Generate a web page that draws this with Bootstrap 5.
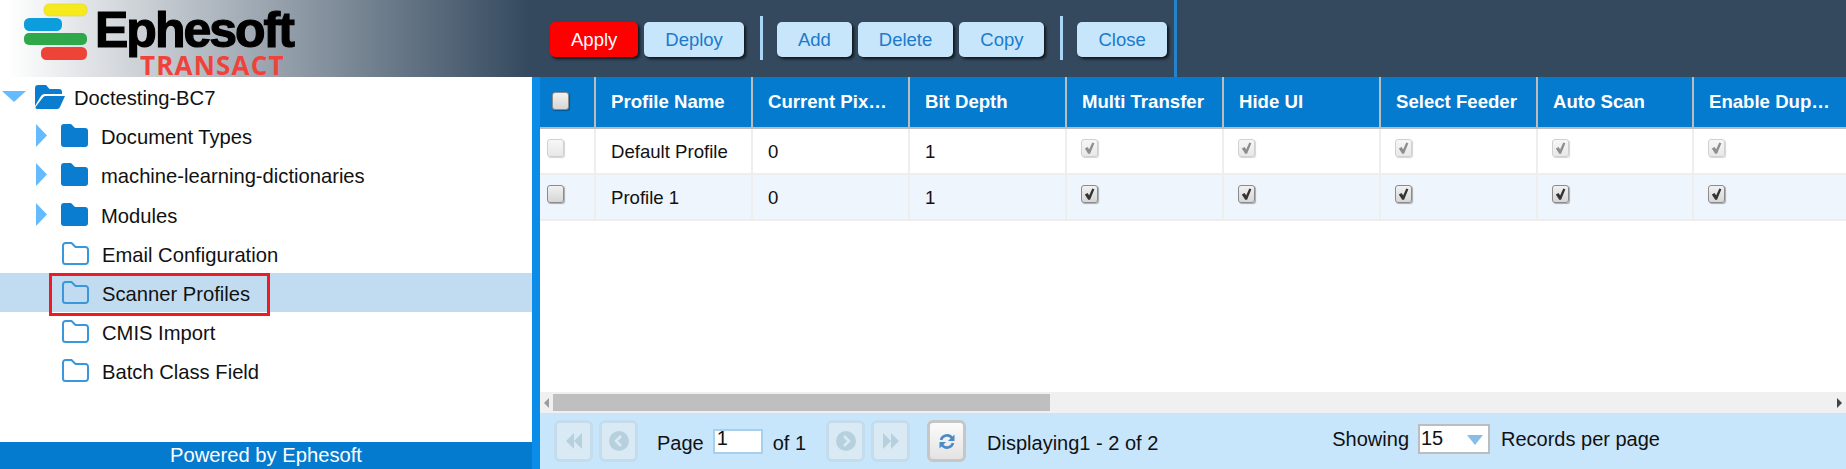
<!DOCTYPE html>
<html lang="en">
<head>
<meta charset="utf-8">
<title>Ephesoft Transact</title>
<link href="https://cdn.jsdelivr.net/npm/bootstrap@5.3.0/dist/css/bootstrap.min.css" rel="stylesheet">
<style>
html,body{height:100%;overflow:hidden}
body{font-family:"Liberation Sans",Arial,sans-serif;color:#111;background:#fff}
.app-shell{height:469px;width:1846px}
.top-bar{height:77px;background:#34495e;flex:none}
.logo-zone{width:540px;height:77px;background:linear-gradient(90deg,#fff 0,#fff 8px,#34495e 530px);flex:none}
.logo-zone svg{display:block}
.logo-main{font-family:"Liberation Sans",Arial,sans-serif;font-weight:700;font-size:50px;letter-spacing:-2px;fill:#000;stroke:#000;stroke-width:1.2}
.logo-sub{font-family:"Open Sans",sans-serif;font-weight:700;font-size:26px;letter-spacing:1.2px;fill:#f0423a}
.tool-zone{height:77px;padding-left:10px;width:637px;border-right:3px solid #2583cc;flex:none}
.tool-btn{height:35px;padding:0 21px;border:0;border-radius:5px;background:#c7e6fc;color:#1b7acb;font-size:18.5px;line-height:35px;box-shadow:2px 2px 3px rgba(0,0,0,.7);margin-top:2px}
.tool-btn:hover,.tool-btn:active{background:#c7e6fc;color:#1b7acb}
.tool-btn.go-red,.tool-btn.go-red:hover{background:#f00;color:#fff}
.tool-btn.raised{padding-bottom:3px}
.tool-gap{margin-left:6px}
.bar-split{width:3px;height:44px;background:#a9d6f6;margin:-2px 14px 0 16px}
.body-zone{height:392px}
.tree-pane{width:532px;flex:none}
.tree-list{padding:0;margin:0;list-style:none}
.tree-row{height:39.2px;font-size:20.2px;position:relative}
.tree-row.picked{background:#c1dcf1}
.tree-label{padding-top:3px;white-space:nowrap}
.tree-row.lvl0 svg.folder-ico{margin-left:9px;margin-right:9px}
.caret-down{margin-left:2px}
.caret-right{margin-left:36px;margin-right:14px}
.solid-label{margin-left:13px}
.leaf-ico{margin-left:62px;margin-right:13px}
.mark-box{position:absolute;left:49px;top:0;width:221px;height:43px;border:3px solid #ed1c24}
.tree-foot{height:27px;background:#047bce;color:#fff;font-size:20.2px;line-height:27px;text-align:center;flex:none}
.pane-split{width:8px;background:#0a8ce8;flex:none}
.grid-pane{width:1306px;flex:none}
.grid-scroll{height:315px;overflow:hidden}
.grid-table{table-layout:fixed;width:1309px;margin:0;border-collapse:separate;border-spacing:0;font-size:18.6px}
.grid-table th,.grid-table td{padding:0 14px 0 15px;vertical-align:middle;white-space:nowrap;overflow:hidden;text-overflow:ellipsis;border:0}
.grid-table th{height:52px;background:#047bce;color:#fff;font-weight:700;border-left:2px solid #bcbcbc;border-bottom:2px solid #bcbcbc}
.grid-table th:first-child{border-left:0;padding:15px 0 0 12px;vertical-align:top}
.grid-table td{height:46px;color:#111;background:#fff;border-left:2px solid #eee;border-bottom:2px solid #eee;padding-top:1px}
.grid-table tr.alt-row td{background:#eef5fc}
.grid-table td:first-child{border-left:0;padding:10px 0 0 7px;vertical-align:top}
.grid-table td.tick-cell{vertical-align:top;padding:10px 0 0 14px}
.c-box{width:54px}
.c-wide{width:157px}
.c-last{width:156px}
.tick{appearance:none;-webkit-appearance:none;display:block;width:17px;height:18px;margin:0;border:1px solid #8b8b8b;border-radius:3px;background:linear-gradient(#f1f1f1,#d6d6d6);box-shadow:1px 1px 1px rgba(0,0,0,.3)}
.tick:checked{background:url("data:image/svg+xml,%3Csvg xmlns='http://www.w3.org/2000/svg' viewBox='0 0 16 17'%3E%3Cpath d='M3 9l3-1.500 1.600 2.600L11 2.500l2.200 1-4.600 11H6.600z' fill='%23333'/%3E%3C/svg%3E") center/100% 100% no-repeat,linear-gradient(#f1f1f1,#d6d6d6)}
.tick:disabled{opacity:.55;border-color:#aaa}
.hscroll{height:21px;background:#f0f0f0;padding:2px 0;flex:none}
.hscroll-thumb{width:497px;height:17px;background:#bfbfbf;margin:0 0 0 4px}
.hscroll-arrow{flex:none}
.pager{height:56px;background:#c7e6fc;font-size:20px;padding-left:14px;flex:none;white-space:nowrap}
.pg-btn{width:39px;height:42px;border:3px solid #c4dcec;border-radius:6px;background:#d9eaf5;display:flex;align-items:center;justify-content:center;padding:0;flex:none}
.pg-btn+.pg-btn{margin-left:6px}
.pg-live{background:linear-gradient(#fbfbfb,#e3e3e3);border-color:#c6c6c6}
.pg-low{padding-top:4px}
.pg-input{width:50px;height:25px;border:2px solid #a6d0ec;border-radius:0;padding:0 0 6px 2px;font-size:20px;line-height:19px;margin:0 10px 0 9px;color:#111}
.pg-text-a{margin-left:19px}
.pg-set-b{margin-left:20px}
.pg-set-c{margin-left:17px}
.pg-text-d{margin-left:21px}
.pg-text-e{margin-left:174px;margin-top:-4px}
.pg-text-f{margin-top:-4px}
.pg-select{width:72px;height:30px;border:2px solid #bdbdbd;border-radius:0;padding:0 0 2px 1px;font-size:20px;line-height:24px;margin:-4px 11px 0 9px;color:#111;background:#fff url("data:image/svg+xml,%3Csvg xmlns='http://www.w3.org/2000/svg' viewBox='0 0 16 10'%3E%3Cpath d='M0 0h16L8 10z' fill='%2387bde6'/%3E%3C/svg%3E") 47px 9px/16px 10px no-repeat}
</style>
</head>
<body>
<div class="app-shell d-flex flex-column">
  <header class="top-bar d-flex">
    <div class="logo-zone">
      <svg width="320" height="77" viewBox="0 0 320 77" role="img" aria-label="Ephesoft Transact">
        <rect x="44" y="4" width="43" height="12" rx="5" fill="#f7ea1c" stroke="#dcd33a" stroke-width=".6"/>
        <rect x="24" y="18" width="38" height="13" rx="5.500" fill="#0b9ddc"/>
        <rect x="24" y="33" width="63" height="12" rx="5" fill="#2fa84a"/>
        <rect x="41" y="47" width="46" height="13" rx="5.500" fill="#ee4438"/>
        <text class="logo-main" x="95" y="47">Ephesoft</text>
        <text class="logo-sub" x="140" y="75">TRANSACT</text>
      </svg>
    </div>
    <div class="tool-zone d-flex align-items-center">
      <button type="button" class="btn tool-btn go-red">Apply</button>
      <button type="button" class="btn tool-btn tool-gap">Deploy</button>
      <span class="bar-split"></span>
      <button type="button" class="btn tool-btn raised">Add</button>
      <button type="button" class="btn tool-btn raised tool-gap">Delete</button>
      <button type="button" class="btn tool-btn raised tool-gap">Copy</button>
      <span class="bar-split"></span>
      <button type="button" class="btn tool-btn">Close</button>
    </div>
  </header>
  <div class="body-zone d-flex">
    <aside class="tree-pane d-flex flex-column">
      <div class="flex-grow-1">
        <ul class="tree-list">
          <li class="tree-row lvl0 d-flex align-items-center">
            <svg class="caret-down" width="24" height="11" viewBox="0 0 24 11"><path d="M0 0h24L12 11z" fill="#66bbff"/></svg>
            <svg class="folder-ico" width="30" height="24" viewBox="0 0 30 24"><path d="M3 0h8l3.500 4H24a3 3 0 0 1 3 3v2H9.500a4 4 0 0 0-3.800 2.500L0 21V3a3 3 0 0 1 3-3z" fill="#0a7dd0"/><path d="M10 11h20l-5 11a3 3 0 0 1-2.700 2H2a1.500 1.500 0 0 1-1.300-2.200L7.500 13A4 4 0 0 1 10 11z" fill="#0a7dd0"/></svg>
            <span class="tree-label">Doctesting-BC7</span>
          </li>
          <li class="tree-row d-flex align-items-center">
            <svg class="caret-right" width="11" height="23" viewBox="0 0 11 23"><path d="M0 0l11 11.500L0 23z" fill="#66bbff"/></svg>
            <svg class="solid-ico" width="27" height="23" viewBox="0 0 27 23"><path d="M3 0h7l4 4h10a3 3 0 0 1 3 3v13a3 3 0 0 1-3 3H3a3 3 0 0 1-3-3V3a3 3 0 0 1 3-3z" fill="#0a7dd0"/></svg>
            <span class="tree-label solid-label">Document Types</span>
          </li>
          <li class="tree-row d-flex align-items-center">
            <svg class="caret-right" width="11" height="23" viewBox="0 0 11 23"><path d="M0 0l11 11.500L0 23z" fill="#66bbff"/></svg>
            <svg class="solid-ico" width="27" height="23" viewBox="0 0 27 23"><path d="M3 0h7l4 4h10a3 3 0 0 1 3 3v13a3 3 0 0 1-3 3H3a3 3 0 0 1-3-3V3a3 3 0 0 1 3-3z" fill="#0a7dd0"/></svg>
            <span class="tree-label solid-label">machine-learning-dictionaries</span>
          </li>
          <li class="tree-row d-flex align-items-center">
            <svg class="caret-right" width="11" height="23" viewBox="0 0 11 23"><path d="M0 0l11 11.500L0 23z" fill="#66bbff"/></svg>
            <svg class="solid-ico" width="27" height="23" viewBox="0 0 27 23"><path d="M3 0h7l4 4h10a3 3 0 0 1 3 3v13a3 3 0 0 1-3 3H3a3 3 0 0 1-3-3V3a3 3 0 0 1 3-3z" fill="#0a7dd0"/></svg>
            <span class="tree-label solid-label">Modules</span>
          </li>
          <li class="tree-row d-flex align-items-center">
            <svg class="leaf-ico" width="27" height="23" viewBox="0 0 27 23"><path d="M3.500 1h6l4 4h10a2.500 2.500 0 0 1 2.500 2.500v12a2.500 2.500 0 0 1-2.500 2.500h-20A2.500 2.500 0 0 1 1 19.500v-16A2.500 2.500 0 0 1 3.500 1z" fill="none" stroke="#3a97dc" stroke-width="2"/></svg>
            <span class="tree-label">Email Configuration</span>
          </li>
          <li class="tree-row picked d-flex align-items-center">
            <svg class="leaf-ico" width="27" height="23" viewBox="0 0 27 23"><path d="M3.500 1h6l4 4h10a2.500 2.500 0 0 1 2.500 2.500v12a2.500 2.500 0 0 1-2.500 2.500h-20A2.500 2.500 0 0 1 1 19.500v-16A2.500 2.500 0 0 1 3.500 1z" fill="none" stroke="#3a97dc" stroke-width="2"/></svg>
            <span class="tree-label">Scanner Profiles</span>
            <span class="mark-box"></span>
          </li>
          <li class="tree-row d-flex align-items-center">
            <svg class="leaf-ico" width="27" height="23" viewBox="0 0 27 23"><path d="M3.500 1h6l4 4h10a2.500 2.500 0 0 1 2.500 2.500v12a2.500 2.500 0 0 1-2.500 2.500h-20A2.500 2.500 0 0 1 1 19.500v-16A2.500 2.500 0 0 1 3.500 1z" fill="none" stroke="#3a97dc" stroke-width="2"/></svg>
            <span class="tree-label">CMIS Import</span>
          </li>
          <li class="tree-row d-flex align-items-center">
            <svg class="leaf-ico" width="27" height="23" viewBox="0 0 27 23"><path d="M3.500 1h6l4 4h10a2.500 2.500 0 0 1 2.500 2.500v12a2.500 2.500 0 0 1-2.500 2.500h-20A2.500 2.500 0 0 1 1 19.500v-16A2.500 2.500 0 0 1 3.500 1z" fill="none" stroke="#3a97dc" stroke-width="2"/></svg>
            <span class="tree-label">Batch Class Field</span>
          </li>
        </ul>
      </div>
      <div class="tree-foot">Powered by Ephesoft</div>
    </aside>
    <div class="pane-split"></div>
    <main class="grid-pane d-flex flex-column">
      <div class="grid-scroll flex-grow-1">
        <table class="table grid-table">
          <colgroup><col class="c-box"><col class="c-wide"><col class="c-wide"><col class="c-wide"><col class="c-wide"><col class="c-wide"><col class="c-wide"><col class="c-last"><col class="c-wide"></colgroup>
          <thead>
            <tr>
              <th><input class="tick" type="checkbox" aria-label="Select all"></th>
              <th>Profile Name</th><th>Current Pixel Type</th><th>Bit Depth</th><th>Multi Transfer</th><th>Hide UI</th><th>Select Feeder</th><th>Auto Scan</th><th>Enable Duplex</th>
            </tr>
          </thead>
          <tbody>
            <tr>
              <td><input class="tick" type="checkbox" disabled aria-label="Select row"></td>
              <td>Default Profile</td><td>0</td><td>1</td>
              <td class="tick-cell"><input class="tick" type="checkbox" checked disabled aria-label="Multi Transfer"></td>
              <td class="tick-cell"><input class="tick" type="checkbox" checked disabled aria-label="Hide UI"></td>
              <td class="tick-cell"><input class="tick" type="checkbox" checked disabled aria-label="Select Feeder"></td>
              <td class="tick-cell"><input class="tick" type="checkbox" checked disabled aria-label="Auto Scan"></td>
              <td class="tick-cell"><input class="tick" type="checkbox" checked disabled aria-label="Enable Duplex"></td>
            </tr>
            <tr class="alt-row">
              <td><input class="tick" type="checkbox" aria-label="Select row"></td>
              <td>Profile 1</td><td>0</td><td>1</td>
              <td class="tick-cell"><input class="tick" type="checkbox" checked aria-label="Multi Transfer"></td>
              <td class="tick-cell"><input class="tick" type="checkbox" checked aria-label="Hide UI"></td>
              <td class="tick-cell"><input class="tick" type="checkbox" checked aria-label="Select Feeder"></td>
              <td class="tick-cell"><input class="tick" type="checkbox" checked aria-label="Auto Scan"></td>
              <td class="tick-cell"><input class="tick" type="checkbox" checked aria-label="Enable Duplex"></td>
            </tr>
          </tbody>
        </table>
      </div>
      <div class="hscroll d-flex align-items-center">
        <svg class="hscroll-arrow ms-1" width="5" height="10" viewBox="0 0 5 10"><path d="M5 0v10L0 5z" fill="#9c9c9c"/></svg>
        <div class="hscroll-thumb"></div>
        <svg class="hscroll-arrow ms-auto me-1" width="5" height="10" viewBox="0 0 5 10"><path d="M0 0v10l5-5z" fill="#444"/></svg>
      </div>
      <div class="pager d-flex align-items-center">
        <button type="button" class="pg-btn" disabled aria-label="First"><svg width="18" height="18" viewBox="0 0 18 18"><path d="M9 1v16L1 9zM17 1v16L9 9z" fill="#b6d0de"/></svg></button>
        <button type="button" class="pg-btn" disabled aria-label="Previous"><svg width="20" height="20" viewBox="0 0 20 20"><circle cx="10" cy="10" r="10" fill="#b6d0de"/><path d="M12 5l-5 5 5 5" fill="none" stroke="#d9eaf5" stroke-width="2.500"/></svg></button>
        <span class="pg-text-a pg-low">Page</span>
        <input class="form-control pg-input" type="text" value="1" aria-label="Page">
        <span class="pg-low">of 1</span>
        <div class="d-flex pg-set-b">
          <button type="button" class="pg-btn" disabled aria-label="Next"><svg width="20" height="20" viewBox="0 0 20 20"><circle cx="10" cy="10" r="10" fill="#b6d0de"/><path d="M8 5l5 5-5 5" fill="none" stroke="#d9eaf5" stroke-width="2.500"/></svg></button>
          <button type="button" class="pg-btn" disabled aria-label="Last"><svg width="18" height="18" viewBox="0 0 18 18"><path d="M1 1v16l8-8zM9 1v16l8-8z" fill="#b6d0de"/></svg></button>
        </div>
        <button type="button" class="pg-btn pg-live pg-set-c" aria-label="Refresh"><svg width="16" height="17" viewBox="0 0 16 17"><path d="M2 7A6.200 6.200 0 0 1 13 5" fill="none" stroke="#4b8ac4" stroke-width="2.600"/><path d="M15.500 1.500V8H9z" fill="#4b8ac4"/><path d="M14 10A6.200 6.200 0 0 1 3 12" fill="none" stroke="#4b8ac4" stroke-width="2.600"/><path d="M.5 15.500V9H7z" fill="#4b8ac4"/></svg></button>
        <span class="pg-text-d pg-low">Displaying1 - 2 of 2</span>
        <span class="pg-text-e">Showing</span>
        <select class="form-select pg-select" aria-label="Records per page"><option>15</option><option>30</option></select>
        <span class="pg-text-f">Records per page</span>
      </div>
    </main>
  </div>
</div>
<script src="https://cdn.jsdelivr.net/npm/bootstrap@5.3.0/dist/js/bootstrap.bundle.min.js"></script>
</body>
</html>
